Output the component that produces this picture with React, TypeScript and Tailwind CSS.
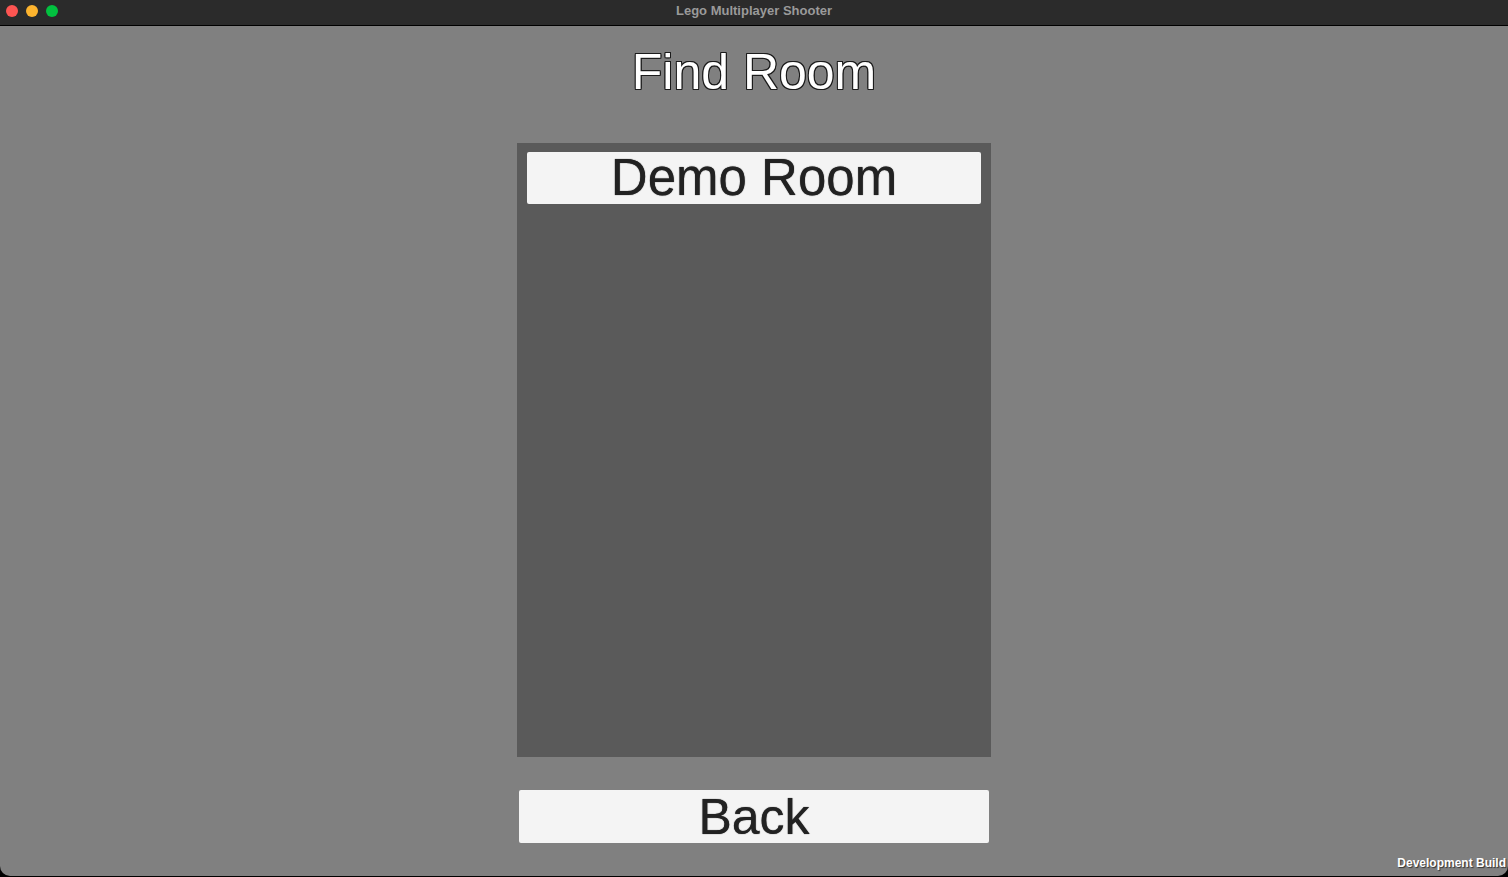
export default function App() {
  return (
    <div className="w-[1508px] h-[877px] bg-black font-['Liberation_Sans',Arial,sans-serif] overflow-hidden">
      {/* Barra de título */}
      <div className="relative h-[26px] bg-[#2b2b2b] border-b border-black flex items-center justify-center">
        <div className="absolute left-[6px] top-[5px] flex gap-[8px]">
          <span className="w-[12px] h-[12px] rounded-full bg-[#fe5552]" />
          <span className="w-[12px] h-[12px] rounded-full bg-[#fdb42e]" />
          <span className="w-[12px] h-[12px] rounded-full bg-[#02c13f]" />
        </div>
        <span className="text-[13px] font-bold text-[#9a9a9a] leading-none -mt-[4px]">Lego Multiplayer Shooter</span>
      </div>

      {/* Contenido */}
      <div className="relative h-[850px] bg-[#808080] rounded-b-[10px] flex flex-col items-center pt-[21px]">
        <h1 className="text-[50px] leading-[50px] text-white [text-shadow:1px_0_0_#1c1c1c,-1px_0_0_#1c1c1c,0_1px_0_#1c1c1c,0_-1px_0_#1c1c1c,1px_1px_0_#1c1c1c,-1px_-1px_0_#1c1c1c,1px_-1px_0_#1c1c1c,-1px_1px_0_#1c1c1c]">
          Find Room
        </h1>

        <div className="mt-[46px] w-[474px] h-[614px] bg-[#5a5a5a] pt-[9px] px-[10px]">
          <div className="h-[52px] bg-[#f4f4f4] rounded-[2px] flex items-center justify-center">
            <span className="text-[51px] leading-[50px] text-[#222222] [text-shadow:0_0_1px_#222222]">Demo Room</span>
          </div>
        </div>

        <button className="mt-[33px] w-[470px] h-[53px] bg-[#f4f4f4] rounded-[2px] flex items-center justify-center">
          <span className="text-[50px] leading-[50px] text-[#222222] [text-shadow:0_0_1px_#222222]">Back</span>
        </button>

        <span className="absolute right-[2px] bottom-[7px] text-[12px] font-bold leading-none text-white [text-shadow:1px_1px_1px_#333333]">
          Development Build
        </span>
      </div>
    </div>
  );
}
